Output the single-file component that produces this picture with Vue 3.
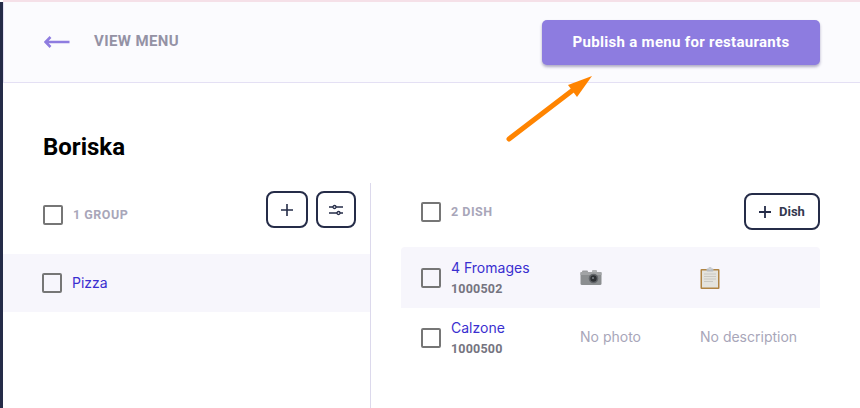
<script setup>
const dishes = [
  { name: '4 Fromages', code: '1000502', hasMedia: true },
  { name: 'Calzone', code: '1000500', hasMedia: false },
]
</script>

<template>
  <div class="page">
    <aside class="rail"></aside>
    <main class="main">
      <header class="topbar">
        <div class="back">
          <svg class="back-icon" width="26" height="14" viewBox="0 0 26 14" fill="none">
            <path d="M25.500 7H1.500M6.500 2L1.500 7L6.500 12" stroke="#8e7ce0" stroke-width="2.600" />
          </svg>
          <span class="back-label">VIEW MENU</span>
        </div>
        <button class="publish">Publish a menu for restaurants</button>
      </header>

      <h1 class="title">Boriska</h1>

      <section class="columns">
        <div class="groups">
          <div class="groups-head">
            <span class="check"></span>
            <span class="count">1 GROUP</span>
            <div class="tools">
              <button class="tool tool-add">
                <svg width="14" height="14" viewBox="0 0 14 14"><path d="M7 1V13M1 7H13" stroke="#252c48" stroke-width="1.600" fill="none" /></svg>
              </button>
              <button class="tool tool-set">
                <svg width="16" height="12" viewBox="0 0 16 12" fill="none" stroke="#252c48" stroke-width="1.300">
                  <path d="M1 3H5M8 3H15M1 9H9M12 9H15" />
                  <circle cx="6.500" cy="3" r="1.500" />
                  <circle cx="10.500" cy="9" r="1.500" />
                </svg>
              </button>
            </div>
          </div>
          <div class="group-row">
            <span class="check"></span>
            <span class="link">Pizza</span>
          </div>
        </div>

        <div class="dishes">
          <div class="dishes-head">
            <span class="check"></span>
            <span class="count">2 DISH</span>
            <button class="add-dish">
              <svg width="14" height="14" viewBox="0 0 14 14"><path d="M7 1V13M1 7H13" stroke="#252c48" stroke-width="1.800" fill="none" /></svg>
              <span>Dish</span>
            </button>
          </div>
          <div v-for="(dish, i) in dishes" :key="dish.code" class="dish-row" :class="{ shaded: i === 0 }">
            <span class="check"></span>
            <div class="dish-name">
              <span class="link">{{ dish.name }}</span>
              <span class="code">{{ dish.code }}</span>
            </div>
            <div class="cell cell-photo">
              <svg v-if="dish.hasMedia" width="22" height="18" viewBox="0 0 22 18">
                <rect x="2" y="1.500" width="6" height="3" rx="1" fill="#9a9c9e" />
                <rect x="12" y="1" width="5" height="3" rx="1" fill="#b0b2b4" />
                <rect x="0.500" y="3" width="21" height="13" rx="1.500" fill="#8b8e90" />
                <rect x="0.500" y="3" width="21" height="3" fill="#a2a4a6" />
                <circle cx="13.500" cy="9.500" r="4.800" fill="#63666a" />
                <circle cx="13.500" cy="9.500" r="3.200" fill="#2e3134" />
                <circle cx="13" cy="9" r="1.100" fill="#7a7f84" />
              </svg>
              <span v-else class="muted">No photo</span>
            </div>
            <div class="cell cell-desc">
              <svg v-if="dish.hasMedia" width="20" height="22" viewBox="0 0 20 22">
                <rect x="0.500" y="2" width="19" height="20" rx="1" fill="#b08443" />
                <rect x="2" y="3.500" width="16" height="17" fill="#e4e3dd" />
                <path d="M4 7H16M4 9.500H16M4 12H16M4 14.500H13" stroke="#c9c8c2" stroke-width="1" />
                <rect x="6.500" y="1.500" width="7" height="3" rx="1" fill="#b8bcc0" />
                <rect x="8.500" y="0" width="3" height="3" rx="1" fill="#c8ccd0" />
              </svg>
              <span v-else class="muted">No description</span>
            </div>
          </div>
        </div>
      </section>

      <svg class="pointer" width="100" height="80" viewBox="0 0 100 80">
        <path d="M6 69L70 20" stroke="#ff8400" stroke-width="5" stroke-linecap="round" fill="none" />
        <path d="M89 6L65 15L74 27Z" fill="#ff8400" />
      </svg>
    </main>
  </div>
</template>

<style>
html, body { margin: 0; background: #fff; }
</style>

<style scoped>
.page {
  display: flex;
  width: 860px;
  height: 408px;
  overflow: hidden;
  font-family: Roboto, "Liberation Sans", sans-serif;
  background: #fff;
}
.rail { width: 3px; flex: none; background: #252c48; margin-top: 2px; }
.main {
  position: relative;
  flex: 1;
  min-width: 0;
  border-top: 2px solid #f5e0e8;
}
.topbar {
  display: flex;
  align-items: center;
  justify-content: space-between;
  box-sizing: border-box;
  height: 81px;
  padding: 0 40px 2px 40px;
  background: #fbfbfe;
  border-bottom: 1px solid #e4e0f4;
  border-left: 1px solid #e4e0f4;
}
.back { display: flex; align-items: center; gap: 24px; }
.back-icon { display: block; margin-top: 2px; }
.back-label { font-size: 15px; font-weight: 700; color: #9492a5; letter-spacing: 0.4px; }
.publish {
  width: 278px;
  height: 45px;
  margin-top: 2px;
  border: 0;
  border-radius: 5px;
  background: #8d7ce0;
  color: #fff;
  font: 700 15px Roboto, sans-serif;
  letter-spacing: 0.3px;
  box-shadow: 0 2px 3px rgba(60, 50, 110, 0.4);
}
.title {
  margin: 0;
  padding: 49px 0 0 40px;
  height: 51px;
  font-size: 24px;
  line-height: 30px;
  font-weight: 700;
  color: #000;
}
.columns { display: flex; height: 225px; }
.groups {
  box-sizing: border-box;
  width: 368px;
  border-right: 1px solid #dcd9ec;
}
.groups-head {
  display: flex;
  align-items: flex-start;
  height: 71px;
  padding: 22px 14px 0 40px;
  box-sizing: border-box;
}
.check {
  box-sizing: border-box;
  flex: none;
  width: 20px;
  height: 20px;
  border: 2px solid #767676;
  border-radius: 2px;
}
.count {
  margin-left: 10px;
  font-size: 12.500px;
  line-height: 20px;
  font-weight: 700;
  letter-spacing: 0.5px;
  color: #a8a6b9;
}
.tools { display: flex; gap: 8px; margin: -14px 0 0 auto; }
.tool {
  box-sizing: border-box;
  display: flex;
  align-items: center;
  justify-content: center;
  height: 37px;
  padding: 0;
  background: #fff;
  border: 2px solid #252c48;
  border-radius: 8px;
}
.tool-add { width: 42px; }
.tool-set { width: 40px; }
.group-row {
  display: flex;
  align-items: center;
  gap: 10px;
  height: 58px;
  padding-left: 39px;
  background: #f7f6fc;
}
.link { font-family: Inter, sans-serif; font-size: 14px; line-height: 20px; color: #3a2fd0; }
.dishes { flex: none; width: 419px; margin-left: 30px; }
.dishes-head {
  display: flex;
  align-items: flex-start;
  box-sizing: border-box;
  height: 64px;
  padding: 19px 0 0 20px;
}
.add-dish {
  box-sizing: border-box;
  display: flex;
  align-items: center;
  justify-content: flex-start;
  gap: 7px;
  width: 76px;
  height: 37px;
  margin: -9px 0 0 auto;
  padding: 0 0 0 12px;
  background: #fff;
  border: 2px solid #252c48;
  border-radius: 8px;
  color: #33394f;
  font: 700 13px Roboto, sans-serif;
}
.dish-row {
  display: flex;
  align-items: center;
  box-sizing: border-box;
  height: 60px;
  padding-left: 20px;
}
.dish-row.shaded {
  height: 61px;
  background: #f7f6fc;
  border-radius: 4px 4px 0 0;
}
.dish-name { display: flex; flex-direction: column; width: 129px; margin: 1px 0 0 10px; }
.code { margin-top: 1px; font-size: 12.500px; line-height: 20px; font-weight: 700; color: #757480; letter-spacing: 0.2px; }
.cell { display: flex; align-items: center; flex: none; }
.cell-photo { width: 120px; }
.muted { margin-bottom: 3px; font-family: Inter, sans-serif; font-size: 14px; color: #a8a6b9; }
.pointer { position: absolute; left: 500px; top: 68px; }
</style>
